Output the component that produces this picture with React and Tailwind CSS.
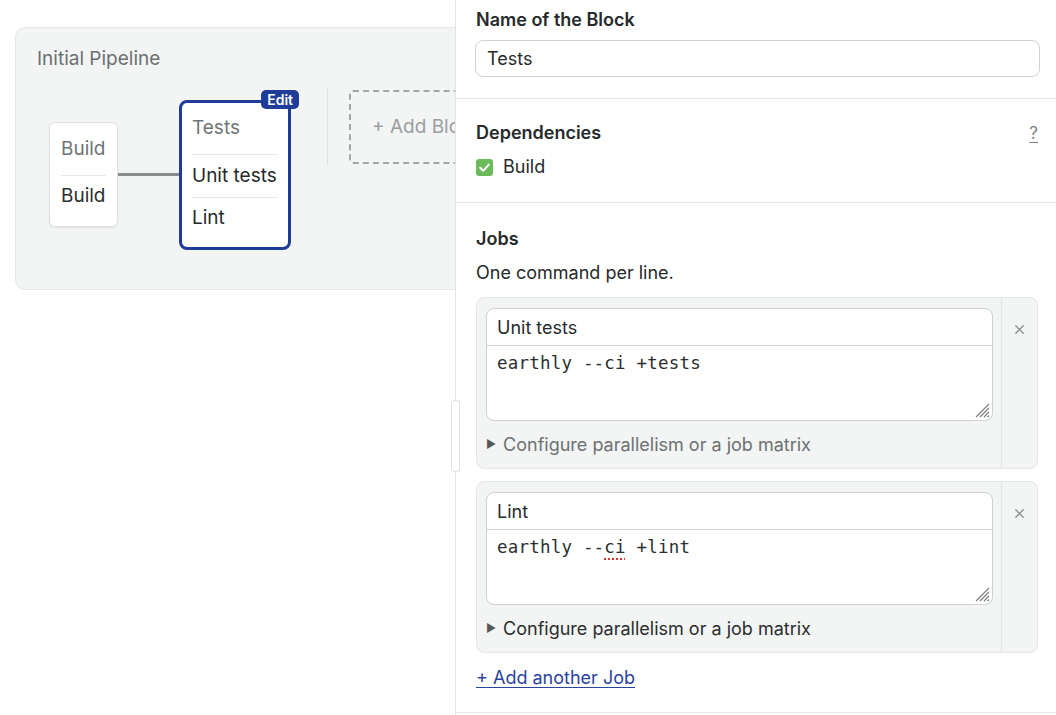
import { X } from "lucide-react";

const jobs = [
  { name: "Unit tests", cmd: "earthly --ci +tests", muted: true },
  { name: "Lint", cmd: "earthly --ci +lint", muted: false, flag: true },
];

function Grip() {
  return (
    <svg className="absolute right-[2px] bottom-[2px]" width="16" height="16" viewBox="0 0 16 16">
      <path d="M15 2 L2 15 M15 6 L6 15 M15 10 L10 15 M15 13.5 L13.5 15" stroke="#7a7e7f" strokeWidth="1.1" fill="none" />
    </svg>
  );
}

function Command({ cmd, flag }) {
  if (!flag) return <span>{cmd}</span>;
  return (
    <span>
      earthly --
      <span className="underline decoration-dotted decoration-[#e03131] decoration-2 underline-offset-[5px]">ci</span>
      {" "}+lint
    </span>
  );
}

function JobCard({ job }) {
  return (
    <div className="flex w-[562px] h-[172px] bg-[#f3f4f4] border border-[#e6e8e8] rounded-[8px]">
      <div className="w-[525px] pl-[9px] pr-[8px] pt-[10px] border-r border-[#e3e5e5]">
        <div className="relative bg-white border border-[#cdd1d1] rounded-[8px] h-[113px]">
          <div className="h-[37px] px-[10px] flex items-center border-b border-[#cdd1d1] text-[18px] text-[#262a2b]">
            {job.name}
          </div>
          <div className="px-[10px] pt-[4px] font-['DejaVu_Sans_Mono',monospace] text-[17.5px] text-[#2a2e2f] tracking-[0.2px]">
            <Command cmd={job.cmd} flag={job.flag} />
          </div>
          <Grip />
        </div>
        <div className={`mt-[10px] flex items-center text-[18px] ${job.muted ? "text-[#6c7172]" : "text-[#2a2e2f]"}`}>
          <span className="text-[11px] mr-[7px] text-[#555a5b]">▶</span>
          Configure parallelism or a job matrix
        </div>
      </div>
      <div className="flex-1 flex justify-center pt-[24px] pr-[1px]">
        <X size={15} strokeWidth={2} color="#8a8e8f" />
      </div>
    </div>
  );
}

export default function App() {
  return (
    <div className="relative w-[1056px] h-[715px] bg-white overflow-hidden flex font-['Inter','Noto_Sans',sans-serif]">
      {/* canvas */}
      <div className="w-[455px] shrink-0 overflow-hidden pt-[27px] pl-[15px]">
        <div className="w-[600px] h-[263px] bg-[#f3f4f4] border border-[#e6e8e8] rounded-[10px] px-[21px] pt-[19px]">
          <div className="text-[19px] leading-[24px] text-[#6b7071]">Initial Pipeline</div>
          <div className="flex items-start mt-[17px]">
            <div className="ml-[12px] mt-[34px] w-[69px] h-[105px] bg-white border border-[#e0e2e2] rounded-[6px] shadow-[0_1px_2px_rgba(0,0,0,0.08)] px-[11px] text-[19px] leading-[24px]">
              <div className="pt-[14px] pb-[14px] text-[#6f7475] border-b border-[#e5e7e7]">Build</div>
              <div className="pt-[8px] text-[#2a2e2f]">Build</div>
            </div>
            <div className="mt-[85px] w-[62px] h-[3px] bg-[#8a8d8e]" />
            <div className="relative -ml-px mt-[12px] w-[112px] h-[150px] border-[3px] border-[#1f3c99] rounded-[8px] bg-white px-[10px] text-[19px] leading-[24px]">
              <div className="absolute -top-[13px] -right-[11px] bg-[#1f3c99] text-white text-[14px] leading-[19px] font-semibold px-[6px] rounded-[5px]">Edit</div>
              <div className="pt-[13px] pb-[14px] text-[#6f7475] border-b border-[#e5e7e7]">Tests</div>
              <div className="pt-[9px] pb-[9px] text-[#262a2b] border-b border-[#e5e7e7]">Unit tests</div>
              <div className="pt-[8px] text-[#262a2b]">Lint</div>
            </div>
            <div className="ml-[36px] w-px h-[77px] bg-[#e0e2e2]" />
            <div className="ml-[21px] mt-[2px] w-[200px] h-[74px] border-2 border-dashed border-[#a3a7a8] rounded-[4px] flex items-center pl-[21px] text-[19px] text-[#9a9ea0] whitespace-nowrap">
              + Add Block
            </div>
          </div>
        </div>
      </div>

      {/* side panel */}
      <div className="relative w-[601px] shrink-0 border-l border-[#e3e5e5] bg-white">
        <div className="absolute -left-[5px] top-[400px] w-[9px] h-[72px] rounded-[3px] border border-[#e0e2e2] bg-white" />

        <div className="pl-[19px] pr-[16px] pt-[8px] pb-[21px] border-b border-[#e6e8e8]">
          <div className="pl-px text-[18px] leading-[24px] font-semibold text-[#262a2b]">Name of the Block</div>
          <div className="mt-[8px] h-[37px] border border-[#cdd1d1] rounded-[8px] flex items-center px-[11px] text-[18px] text-[#262a2b]">
            Tests
          </div>
        </div>

        <div className="pl-[20px] pr-[18px] pt-[22px] pb-[23px] border-b border-[#e6e8e8]">
          <div className="flex items-center justify-between">
            <div className="text-[18px] leading-[24px] font-semibold text-[#262a2b]">Dependencies</div>
            <div className="text-[17px] leading-[24px] text-[#7a7e7f] underline underline-offset-[3px]">?</div>
          </div>
          <div className="mt-[10px] flex items-center text-[18px] leading-[24px] text-[#262a2b]">
            <svg width="17" height="17" viewBox="0 0 17 17" className="mr-[10px]">
              <rect width="17" height="17" rx="3" fill="#6cbb5a" />
              <path d="M4.2 8.8 L7.2 11.8 L12.8 5.6" stroke="white" strokeWidth="2" fill="none" strokeLinecap="round" strokeLinejoin="round" />
            </svg>
            Build
          </div>
        </div>

        <div className="pl-[20px] pr-[18px] pt-[24px] pb-[22px] border-b border-[#e6e8e8]">
          <div className="text-[18px] leading-[24px] font-semibold text-[#262a2b]">Jobs</div>
          <div className="mt-[10px] text-[18px] leading-[24px] text-[#262a2b]">One command per line.</div>
          <div className="mt-[12px] flex flex-col gap-[12px]">
            {jobs.map((job) => (
              <JobCard key={job.name} job={job} />
            ))}
          </div>
          <a className="inline-block mt-[13px] text-[18px] leading-[24px] text-[#2a43a0] underline underline-offset-[3px]" href="#">
            + Add another Job
          </a>
        </div>
      </div>
    </div>
  );
}
